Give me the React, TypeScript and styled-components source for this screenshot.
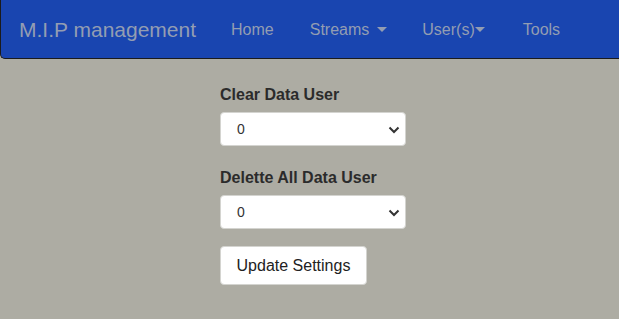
import styled, { createGlobalStyle } from "styled-components";

const GlobalStyle = createGlobalStyle`
    html, body {
        margin: 0;
        padding: 0;
        background: #adaca3;
        font-family: "Liberation Sans", Arial, sans-serif;
    }
`;

const Page = styled.div`
    width: 619px;
    height: 319px;
    overflow: hidden;
    background: #adaca3;
`;

const NavBar = styled.nav`
    display: flex;
    align-items: center;
    height: 59px;
    width: 640px;
    box-sizing: border-box;
    background: #1945b0;
    border-left: 1px solid #1b1b1b;
    border-bottom: 1px solid #1b1b1b;
    border-bottom-left-radius: 5px;
    padding: 1px 0 0 18px;
`;

const Brand = styled.a`
    font-size: 21px;
    color: #939db2;
    text-decoration: none;
    margin-right: 35px;
`;

const NavLink = styled.a<{ $gap: number }>`
    font-size: 16px;
    color: #939db2;
    text-decoration: none;
    margin-right: ${(p) => p.$gap}px;
    display: flex;
    align-items: center;
`;

const Caret = styled.span<{ $space: number }>`
    display: inline-block;
    width: 0;
    height: 0;
    margin-left: ${(p) => p.$space}px;
    border-top: 5px solid #939db2;
    border-left: 5px solid transparent;
    border-right: 5px solid transparent;
`;

const Main = styled.main`
    padding: 27px 0 0 220px;
    display: flex;
    flex-direction: column;
    align-items: flex-start;
`;

const Label = styled.label`
    font-size: 16px;
    font-weight: bold;
    color: #2b2b2b;
    margin-bottom: 8px;
`;

const SelectBox = styled.div`
    position: relative;
    width: 186px;
    height: 34px;
    box-sizing: border-box;
    background: #fff;
    border: 1px solid #d4d4d0;
    border-radius: 4px;
    display: flex;
    align-items: center;
    padding-left: 16px;
    font-size: 14px;
    color: #333;
    margin-bottom: 23px;
`;

const Chevron = styled.svg`
    position: absolute;
    right: 5px;
    top: 13px;
`;

const Button = styled.button`
    font-family: "Liberation Sans", Arial, sans-serif;
    font-size: 16px;
    color: #222;
    background: #fff;
    border: 1px solid #d4d4d0;
    border-radius: 4px;
    width: 147px;
    height: 39px;
    margin-top: -6px;
    padding: 0;
`;

function Select({ value }: { value: string }) {
    return (
        <SelectBox>
            {value}
            <Chevron width="12" height="8" viewBox="0 0 12 8">
                <path d="M1.5 1.5 L6 6 L10.5 1.5" fill="none" stroke="#333" strokeWidth="2" />
            </Chevron>
        </SelectBox>
    );
}

export default function App() {
    return (
        <Page>
            <GlobalStyle />
            <NavBar>
                <Brand>M.I.P management</Brand>
                <NavLink $gap={36}>Home</NavLink>
                <NavLink $gap={35}>
                    Streams<Caret $space={8} />
                </NavLink>
                <NavLink $gap={38}>
                    User(s)<Caret $space={0} />
                </NavLink>
                <NavLink $gap={0}>Tools</NavLink>
            </NavBar>
            <Main>
                <Label>Clear Data User</Label>
                <Select value="0" />
                <Label>Delette All Data User</Label>
                <Select value="0" />
                <Button>Update Settings</Button>
            </Main>
        </Page>
    );
}
